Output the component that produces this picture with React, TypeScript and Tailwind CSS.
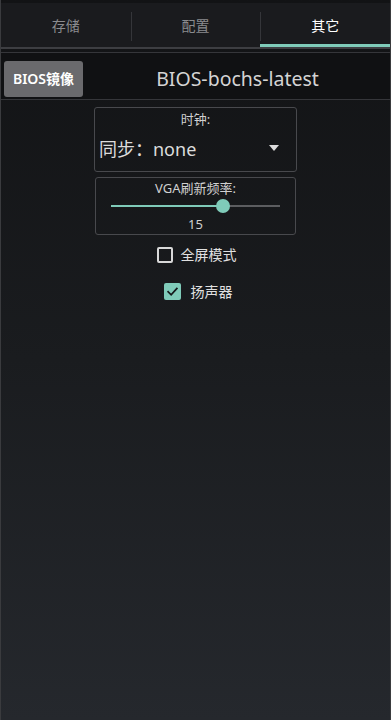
import { useState } from 'react'

const font = { fontFamily: '"Noto Sans", "Noto Sans CJK SC", sans-serif' }

export default function App() {
  const [tab] = useState(2)
  const [fullscreen, setFullscreen] = useState(false)
  const [speaker, setSpeaker] = useState(true)
  const tabs = ['存储', '配置', '其它']

  return (
    <div
      style={font}
      className="h-[720px] w-[391px] overflow-hidden border-x border-[#3a3b3e] bg-gradient-to-b from-[#121315] via-[#1a1c1f] to-[#25282d] pt-[3px] text-[#d6d6d6]"
    >
      {/* Tabs */}
      <div className="flex h-[46px] bg-[#1a1b1e] border-b-2 border-[#3d3e42]">
        {tabs.map((t, i) => (
          <div key={t} className="relative flex flex-1 items-center justify-center">
            {i > 0 && <div className="absolute left-0 top-[9px] h-[29px] w-px bg-[#35363a]" />}
            <span className={`text-[14px] ${i === tab ? 'text-white' : 'text-[#8a8b8e]'}`}>{t}</span>
            {i === tab && <div className="absolute bottom-0 left-0 right-0 h-[3px] bg-[#7fcbb9]" />}
          </div>
        ))}
      </div>

      {/* BIOS row */}
      <div className="mt-[3px] flex h-[48px] items-center border-y border-[#35363a] bg-[#101113] pl-[3px] pt-[5px]">
        <button className="flex h-[36px] w-[79px] items-center justify-center rounded-[3px] bg-[#6a6a6d] text-[14px] font-semibold text-white">
          BIOS镜像
        </button>
        <div className="flex-1 pl-[2px] text-center text-[19.5px] text-[#d4d4d4]">BIOS-bochs-latest</div>
      </div>

      {/* Settings */}
      <div className="flex flex-col items-center pt-[7px]">
        <div className="w-[203px] rounded-[3px] border border-[#48494d] pb-[4px] pt-[2px]">
          <div className="text-center text-[13px] leading-[18px] text-[#d0d0d0]">时钟:</div>
          <div className="flex h-[39px] items-center justify-between pl-[4px] pr-[17px]">
            <span className="pt-[3px] text-[18px] text-[#dcdcdc]">同步：none</span>
            <svg width="10" height="6" viewBox="0 0 10 6">
              <path d="M0 0 L10 0 L5 6 Z" fill="#dcdcdc" />
            </svg>
          </div>
        </div>

        <div className="mt-[5px] w-[201px] rounded-[3px] border border-[#48494d] pb-[1px] pt-[1px]">
          <div className="text-center text-[13px] leading-[18px] text-[#d0d0d0]">VGA刷新频率:</div>
          <div className="relative mx-[15px] h-[18px]">
            <div className="absolute left-0 right-0 top-[8px] h-[2px] bg-[#5c5d60]" />
            <div className="absolute left-0 top-[8px] h-[2px] w-[112px] bg-[#7fcbb9]" />
            <div className="absolute left-[105px] top-[2px] h-[14px] w-[14px] rounded-full bg-[#7fcbb9]" />
          </div>
          <div className="text-center text-[13px] leading-[18px] text-[#d0d0d0]">15</div>
        </div>

        <label className="mt-[9px] flex cursor-pointer items-center gap-[8px] pl-[2px]" onClick={() => setFullscreen(!fullscreen)}>
          <span className={`flex h-[16px] w-[16px] items-center justify-center rounded-[2px] ${fullscreen ? 'bg-[#7fcbb9]' : 'border-2 border-[#d8d8d8]'}`}>
            {fullscreen && <Check />}
          </span>
          <span className="text-[14px] text-[#e0e0e0]">全屏模式</span>
        </label>

        <label className="mt-[16px] flex cursor-pointer items-center gap-[10px] pl-[5px]" onClick={() => setSpeaker(!speaker)}>
          <span className={`flex h-[17px] w-[17px] items-center justify-center rounded-[2px] ${speaker ? 'bg-[#7fcbb9]' : 'border-2 border-[#d8d8d8]'}`}>
            {speaker && <Check />}
          </span>
          <span className="text-[14px] text-[#e0e0e0]">扬声器</span>
        </label>
      </div>
    </div>
  )
}

function Check() {
  return (
    <svg width="13" height="13" viewBox="0 0 24 24" fill="none" stroke="#15191b" strokeWidth="3.2" strokeLinecap="square">
      <path d="M4 12.5 L9.5 18 L20 6.5" />
    </svg>
  )
}
